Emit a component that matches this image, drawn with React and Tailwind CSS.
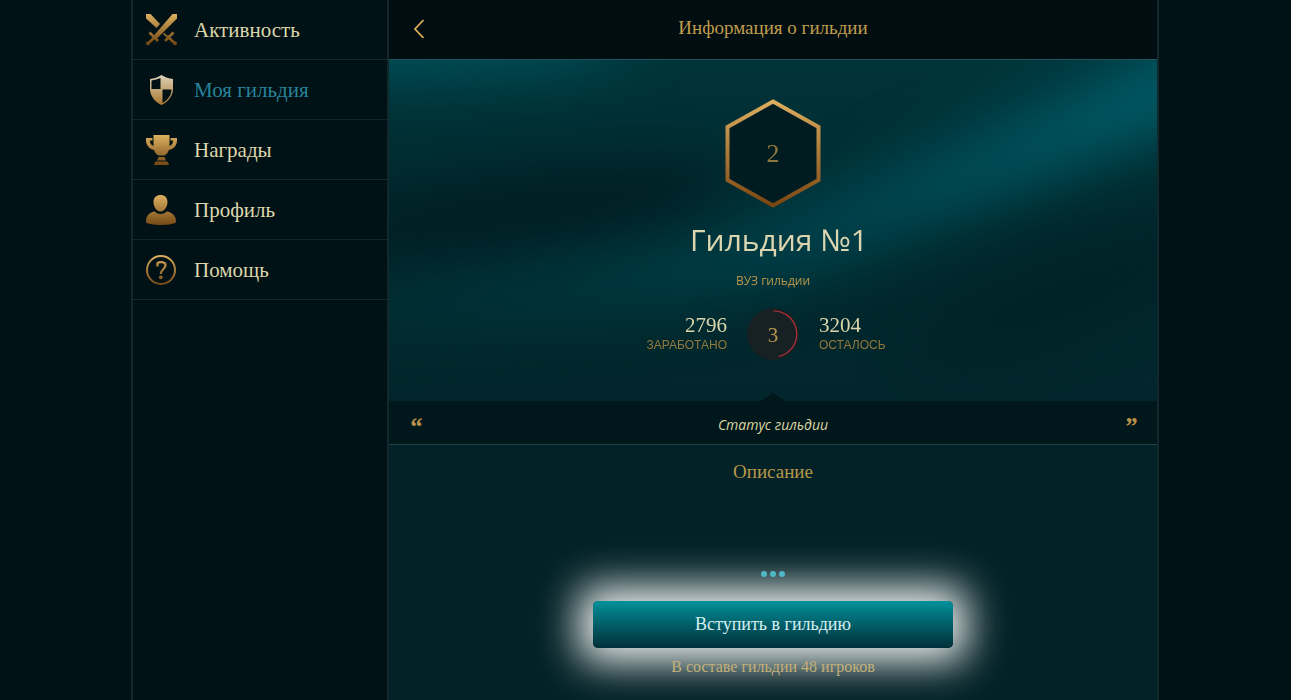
const gold = "url(#gold)";

function GoldDefs() {
  return (
    <svg width="0" height="0" className="absolute" aria-hidden="true">
      <defs>
        <linearGradient id="gold" gradientUnits="userSpaceOnUse" x1="0" y1="0" x2="0" y2="32">
          <stop offset="0" stopColor="#dcb060" />
          <stop offset="1" stopColor="#6e420f" />
        </linearGradient>
        <linearGradient id="goldLight" gradientUnits="userSpaceOnUse" x1="0" y1="0" x2="0" y2="32">
          <stop offset="0" stopColor="#e0d6bc" />
          <stop offset="1" stopColor="#a87428" />
        </linearGradient>
        <linearGradient id="hexStroke" gradientUnits="userSpaceOnUse" x1="0" y1="0" x2="0" y2="110">
          <stop offset="0" stopColor="#dfb062" />
          <stop offset="1" stopColor="#774410" />
        </linearGradient>
      </defs>
    </svg>
  );
}

const Icon = ({ children, top = 0 }) => (
  <svg width="32" height="32" viewBox={`0 ${top} 32 32`} aria-hidden="true">
    {children}
  </svg>
);

const Swords = () => (
  <Icon>
    <g fill={gold}>
      <path d="M31 0v4.500L10 25.500 7.500 22 26.500 0z" />
      <path d="M0 0v4.500l10.500 9.500 3.500-4L4.500 0z" />
      <path d="M17 20l3 3 1.200-1.200-3-3z" />
    </g>
    <g stroke={gold} fill="none">
      <path d="M3.500 18.500l8.500 8.500M9 23L1.500 30M27.500 18.500L19 27M21 22l8.500 8" strokeWidth="2.600" />
    </g>
    <circle cx="1.900" cy="29.300" r="1.900" fill={gold} />
    <circle cx="29.100" cy="29.300" r="1.900" fill={gold} />
  </Icon>
);

const Shield = () => (
  <Icon>
    <path
      fillRule="evenodd"
      fill="url(#goldLight)"
      d="M15.500 1C12 3.500 8 4.500 4 5v10c0 7 5 13 11.500 16C22 28 27 22 27 15V5c-4-.5-8-1.500-11.500-4zM14.500 4v11H5.500V6.500c3.500-.5 6-1.200 9-2.500zM16.500 15.500h9c0 5.500-3.500 10.500-9 13.500z"
    />
  </Icon>
);

const Trophy = () => (
  <Icon top={-1}>
    <path
      fill={gold}
      d="M7.500 0h16v9c0 6.500-1.500 9.500-5 11.500h-6C9 18.500 7.500 15.500 7.500 9zM12.500 22h6l1.500 3.500h-9zM9.500 26.500h12l1.700 3.500H7.800z"
    />
    <path
      fill={gold}
      d="M0 3h6.500v2.500H4c0 3 1 4.800 4 5.500l1 4C3 14.500 0 10 0 5.500zM31 3h-6.500v2.500H27c0 3-1 4.800-4 5.500l-1 4c6-.5 9-5 9-9.500z"
    />
  </Icon>
);

const Person = () => (
  <Icon top={-1}>
    <path
      fill={gold}
      d="M14.500 0C18.500 0 21.500 2.500 21.500 7s-3 9.500-7 9.500S7.500 11.500 7.500 7 10.500 0 14.500 0zM9 16.500c1.500 1.800 3.500 2.500 5.500 2.500s4.500-.7 6-2.500C26 17 30 21 30 26v1.500c-3 1.800-9 2.500-15 2.500S3 29.300 0 27.500V26c0-5 3.500-9 9-9.500z"
    />
  </Icon>
);

const Help = () => (
  <Icon top={-1}>
    <circle cx="15" cy="15" r="14" fill="none" stroke={gold} strokeWidth="2" />
    <path
      fill="none"
      stroke={gold}
      strokeWidth="2.300"
      d="M11.500 11.500V8.200c1.500-1.400 7.800-2 8 1.800.2 4-4.500 4-4.700 9"
    />
    <circle cx="14.800" cy="22.300" r="1.900" fill={gold} />
  </Icon>
);

const items = [
  { label: "Активность", Glyph: Swords },
  { label: "Моя гильдия", Glyph: Shield, active: true },
  { label: "Награды", Glyph: Trophy },
  { label: "Профиль", Glyph: Person },
  { label: "Помощь", Glyph: Help },
];

function Sidebar() {
  return (
    <nav className="w-[256px] shrink-0 border-l-2 border-[#13282b]">
      <ul>
        {items.map(({ label, Glyph, active }) => (
          <li key={label}>
            <a
              href="#"
              aria-current={active ? "page" : undefined}
              className={
                "flex h-[60px] items-center gap-4 border-b border-[#13282b] pl-[13px] text-[21px] leading-7 " +
                (active ? "text-[#27829a]" : "text-[#dcd6ac]")
              }
            >
              <Glyph />
              {label}
            </a>
          </li>
        ))}
      </ul>
    </nav>
  );
}

function Header() {
  return (
    <header className="grid h-[60px] grid-cols-[60px_1fr_60px] items-center border-b border-[#24555a] bg-[#000e11] pb-1">
      <button type="button" aria-label="Назад" className="flex h-full items-center justify-center">
        <svg width="12" height="20" viewBox="0 0 12 20" aria-hidden="true">
          <path d="M10.500 2L2 11l8.500 9" fill="none" stroke="#dcae58" strokeWidth="1.800" />
        </svg>
      </button>
      <h1 className="text-center text-[19px] leading-7 text-[#c09c4c]">Информация о гильдии</h1>
    </header>
  );
}

function Level() {
  return (
    <div className="grid size-[52px] place-items-center text-[21px] text-[#b8974a]">
      <svg width="52" height="52" viewBox="0 0 52 52" className="col-start-1 row-start-1" aria-hidden="true">
        <circle cx="26" cy="26" r="26" fill="#172124" />
        <path d="M26.500 3a23 23 0 0 1 5 45.500" fill="none" stroke="#b9323a" strokeWidth="1.200" />
      </svg>
      <span className="col-start-1 row-start-1 pt-1">3</span>
    </div>
  );
}

function Stat({ value, label, right }) {
  return (
    <div className={right ? "pt-0.5 text-right" : "pt-0.5 text-left"}>
      <div className="text-[21px] leading-5 text-[#dcd6ac]">{value}</div>
      <div className="font-['Liberation_Sans',sans-serif] text-xs leading-5 text-[#94783c]">{label}</div>
    </div>
  );
}

function Backdrop() {
  return (
    <svg
      viewBox="0 0 768 341"
      preserveAspectRatio="none"
      className="absolute inset-0 -z-10 size-full"
      aria-hidden="true"
    >
      <defs>
        <linearGradient id="sea" x1="0" y1="0" x2="0" y2="1">
          <stop offset="0" stopColor="#01343a" />
          <stop offset="0.5" stopColor="#01282d" />
          <stop offset="1" stopColor="#02262b" />
        </linearGradient>
        <linearGradient id="beam" gradientUnits="userSpaceOnUse" x1="0" y1="0" x2="768" y2="0">
          <stop offset="0" stopColor="#003a42" stopOpacity="0.35" />
          <stop offset="0.5" stopColor="#00444e" stopOpacity="0.8" />
          <stop offset="1" stopColor="#005a66" />
        </linearGradient>
        <filter id="soft" x="-50%" y="-50%" width="200%" height="200%" colorInterpolationFilters="sRGB">
          <feGaussianBlur stdDeviation="28" />
        </filter>
      </defs>
      <rect width="768" height="341" fill="url(#sea)" />
      <g filter="url(#soft)">
        <ellipse cx="130" cy="155" rx="210" ry="34" fill="#001c21" transform="rotate(-8 130 155)" />
        <ellipse cx="680" cy="235" rx="160" ry="34" fill="#002227" transform="rotate(-20 680 235)" />
        <path d="M-80 245C120 230 300 225 450 165S680 70 860 -5" fill="none" stroke="url(#beam)" strokeWidth="78" />
        <ellipse cx="0" cy="-16" rx="240" ry="34" fill="#005059" />
      </g>
    </svg>
  );
}

function Hero() {
  return (
    <section className="relative isolate flex h-[341px] flex-col items-center overflow-hidden pt-[38px]">
      <Backdrop />
      <div className="grid place-items-center text-[26px] text-[#8f7840]">
        <svg width="98" height="110" viewBox="0 0 98 110" className="col-start-1 row-start-1" aria-hidden="true">
          <path d="M49 3.500L94.500 29v53L49 107.500 3.500 82V29z" fill="#001c21" stroke="url(#hexStroke)" strokeWidth="4" />
        </svg>
        <span className="col-start-1 row-start-1">2</span>
      </div>
      <h2 className="mt-3 pl-3 font-['Open_Sans',sans-serif] text-[30px] leading-10 font-medium text-[#dcd6b0]">
        Гильдия №1
      </h2>
      <p className="mt-[11px] font-['Open_Sans',sans-serif] text-xs leading-5 font-medium text-[#b8974a]">
        ВУЗ гильдии
      </p>
      <div className="mt-[17px] grid w-full grid-cols-[1fr_52px_1fr] items-center gap-5">
        <Stat value="2796" label="ЗАРАБОТАНО" right />
        <Level />
        <Stat value="3204" label="ОСТАЛОСЬ" />
      </div>
    </section>
  );
}

function Status() {
  return (
    <section className="relative flex h-11 items-center justify-between border-b border-[#1f4347] bg-[#00171b] px-5">
      <svg width="24" height="8" viewBox="0 0 24 8" className="absolute -top-2 left-1/2 -translate-x-1/2" aria-hidden="true">
        <path d="M0 8L12 0l12 8z" fill="#00171b" />
      </svg>
      <span className="h-5 text-[26px] leading-7 font-bold text-[#b8904a] italic">“</span>
      <p className="pt-1 font-['Open_Sans',sans-serif] text-sm font-medium text-[#dcd6a4] italic">Статус гильдии</p>
      <span className="h-5 text-[26px] leading-7 font-bold text-[#b8904a] italic">”</span>
    </section>
  );
}

export default function App() {
  return (
    <div className="min-h-screen bg-[#001215] font-['Liberation_Serif',serif]">
      <GoldDefs />
      <div className="mx-auto flex min-h-screen max-w-[1029px] pr-px">
        <Sidebar />
        <main className="flex min-w-0 flex-1 flex-col border-x-2 border-[#13282b] bg-[#032227]">
          <Header />
          <Hero />
          <Status />
          <section className="flex flex-col items-center">
            <h3 className="mt-[13px] text-[19px] leading-7 text-[#b8974a]">Описание</h3>
            <button type="button" aria-label="Показать описание" className="relative z-10 mt-[85px] flex gap-[3px]">
              <i className="size-1.5 rounded-full bg-[#4fb8c4]" />
              <i className="size-1.5 rounded-full bg-[#4fb8c4]" />
              <i className="size-1.5 rounded-full bg-[#4fb8c4]" />
            </button>
            <button
              type="button"
              className="mt-6 h-[47px] w-[360px] max-w-full rounded-[5px] bg-linear-to-b from-[#01929b] to-[#01303a] pb-0.5 text-lg text-[#d6eef0] shadow-[0_0_40px_14px_rgba(255,255,255,0.95)]"
            >
              Вступить в гильдию
            </button>
            <p className="relative mt-[7px] text-base leading-6 text-[#c4b078]">В составе гильдии 48 игроков</p>
          </section>
        </main>
      </div>
    </div>
  );
}
